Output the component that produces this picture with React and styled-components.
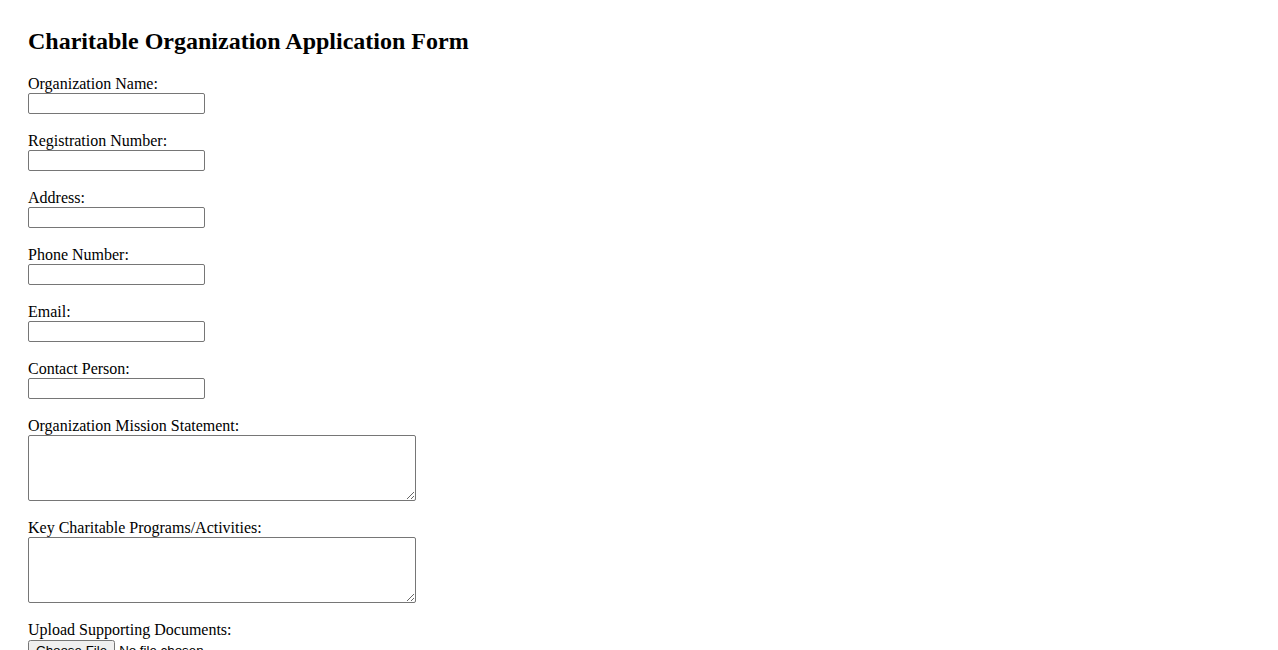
import styled, { createGlobalStyle } from "styled-components";

const GlobalStyle = createGlobalStyle`
  body {
    margin: 8px;
    background: #ffffff;
    color: #000000;
    font-family: "Liberation Serif", "Times New Roman", serif;
    font-size: 16px;
  }
`;

const Page = styled.div`
  padding: 19px 20px;
`;

const Title = styled.h2`
  margin: 0 0 20px;
  font-size: 24px;
  line-height: 28px;
  font-weight: bold;
`;

const Form = styled.form`
  display: flex;
  flex-direction: column;
  align-items: flex-start;
  gap: 18px;
`;

const Field = styled.div`
  display: flex;
  flex-direction: column;
  align-items: flex-start;
`;

const Label = styled.label`
  display: block;
  line-height: 18px;
`;

const TextInput = styled.input`
  box-sizing: border-box;
  width: 177px;
  height: 21px;
  margin: 0;
  padding: 1px 2px;
  border: 1px solid #767676;
  border-radius: 2px;
  background: #fff;
  font-family: "Liberation Sans", Arial, sans-serif;
  font-size: 13.33px;
`;

const TextArea = styled.textarea`
  box-sizing: border-box;
  width: 388px;
  height: 66px;
  margin: 0;
  padding: 2px;
  border: 1px solid #767676;
  border-radius: 2px;
  background: #fff;
  font-family: "Liberation Mono", monospace;
  font-size: 13.33px;
`;

const FileInput = styled.input`
  margin: 1px 0 0;
  font-family: "Liberation Sans", Arial, sans-serif;
  font-size: 13.33px;
`;

const textFields = [
  { id: "orgName", label: "Organization Name:" },
  { id: "regNumber", label: "Registration Number:" },
  { id: "address", label: "Address:" },
  { id: "phone", label: "Phone Number:" },
  { id: "email", label: "Email:" },
  { id: "contact", label: "Contact Person:" },
];

const areaFields = [
  { id: "mission", label: "Organization Mission Statement:" },
  { id: "programs", label: "Key Charitable Programs/Activities:" },
];

export default function App() {
  return (
    <>
      <GlobalStyle />
      <Page>
        <Title>Charitable Organization Application Form</Title>
        <Form onSubmit={(e) => e.preventDefault()}>
          {textFields.map((f) => (
            <Field key={f.id}>
              <Label htmlFor={f.id}>{f.label}</Label>
              <TextInput id={f.id} type="text" />
            </Field>
          ))}
          {areaFields.map((f) => (
            <Field key={f.id}>
              <Label htmlFor={f.id}>{f.label}</Label>
              <TextArea id={f.id} />
            </Field>
          ))}
          <Field>
            <Label htmlFor="docs">Upload Supporting Documents:</Label>
            <FileInput id="docs" type="file" />
          </Field>
        </Form>
      </Page>
    </>
  );
}
